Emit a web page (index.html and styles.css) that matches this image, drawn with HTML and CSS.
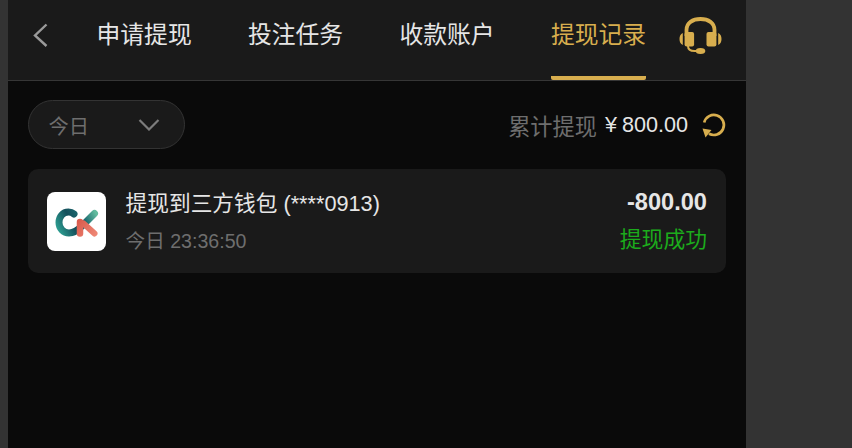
FILE: index.html
```html
<!DOCTYPE html>
<html lang="zh-CN">
<head>
  <meta charset="UTF-8" />
  <title>提现记录</title>
  <link rel="stylesheet" href="styles.css">
</head>
<body>
  <div class="app">
    <header class="topbar">
      <svg class="back" width="16" height="24" viewBox="0 0 16 24"><path d="M14.5 1.5 3 12.5 14.5 23" fill="none" stroke="#9a9a9a" stroke-width="2.4"/></svg>
      <nav class="tabs">
        <div class="tab">申请提现</div>
        <div class="tab">投注任务</div>
        <div class="tab">收款账户</div>
        <div class="tab active">提现记录</div>
      </nav>
      <svg class="support" width="44" height="40" viewBox="0 0 44 40">
        <path d="M7.500 20V14C7.500 7 13.500 3 21.500 3s14 4 14 11v6" fill="none" stroke="#d8ae4e" stroke-width="3.800"/>
        <rect x="5.600" y="16" width="9.500" height="14.500" rx="2" fill="#d8ae4e"/>
        <rect x="27.500" y="16" width="9.900" height="14.500" rx="2" fill="#d8ae4e"/>
        <path d="M3.800 17v12C1.500 28 .5 26 .5 23s1-5 3.300-6zM39.200 17v12c2.300-1 3.300-3 3.300-6s-1-5-3.300-6z" fill="#d8ae4e"/>
        <path d="M9 30c0 3.500 3 5 6.500 5H20" fill="none" stroke="#d8ae4e" stroke-width="2"/>
        <ellipse cx="21.500" cy="35" rx="4.800" ry="3" fill="#d8ae4e"/>
      </svg>
    </header>

    <main class="content">
      <div class="toolbar">
        <div class="filter">
          <span>今日</span>
          <svg width="22" height="12" viewBox="0 0 22 12"><path d="M1.500 1 11 10.500 20.500 1" fill="none" stroke="#7c7c7c" stroke-width="2.200"/></svg>
        </div>
        <div class="total">
          <span class="total-label">累计提现</span>
          <span class="total-value"><span class="yen">¥</span>800.00</span>
          <svg class="refresh" width="26" height="26" viewBox="0 0 26 26">
            <path d="M3.200 10.500A10 10 0 1 1 8 21.700" fill="none" stroke="#d8ae4e" stroke-width="2.700"/>
            <path d="M1.500 16.500 10.500 18 4.500 25.500z" fill="#d8ae4e"/>
          </svg>
        </div>
      </div>

      <div class="record">
        <svg class="logo" width="59" height="59" viewBox="0 0 59 59">
          <defs>
            <linearGradient id="ck" gradientUnits="userSpaceOnUse" x1="10" y1="40" x2="48" y2="20">
              <stop offset="0" stop-color="#2fa596"/>
              <stop offset="0.4" stop-color="#14505c"/>
              <stop offset="0.7" stop-color="#1c6a70"/>
              <stop offset="1" stop-color="#62bb9e"/>
            </linearGradient>
            <linearGradient id="ck-red" gradientUnits="userSpaceOnUse" x1="30" y1="28" x2="50" y2="44">
              <stop offset="0" stop-color="#d9584a"/>
              <stop offset="1" stop-color="#f08a78"/>
            </linearGradient>
          </defs>
          <rect width="59" height="59" rx="8" fill="#fff"/>
          <path d="M27 22C25.500 20.700 23.500 20 21.500 20 15.500 20 12 25 12 30.500 12 36.500 16.500 41 22 41 27.500 41 31 38 35 34L47.500 21.500" fill="none" stroke="url(#ck)" stroke-width="7" stroke-linecap="round"/>
          <path d="M36.500 31.500 47.500 41.500" fill="none" stroke="url(#ck-red)" stroke-width="6" stroke-linecap="round"/>
          <path d="M33 30V41.500" fill="none" stroke="url(#ck-red)" stroke-width="6.500" stroke-linecap="round"/>
        </svg>
        <div class="record-info">
          <div class="record-title">提现到三方钱包 (****0913)</div>
          <div class="record-time">今日 23:36:50</div>
        </div>
        <div class="record-side">
          <div class="record-amount">-800.00</div>
          <div class="record-status">提现成功</div>
        </div>
      </div>
    </main>
  </div>
</body>
</html>
```

FILE: styles.css
```css
* {
  box-sizing: border-box;
}

html,
body {
  height: 100%;
}

body {
  margin: 0;
  padding-left: 8px;
  overflow: hidden;
  background-color: #333333;
  font-family: "Liberation Sans", "Noto Sans CJK SC", sans-serif;
}

.app {
  width: 738px;
  height: 100%;
  background-color: #0a0a0a;
}

.topbar {
  display: flex;
  align-items: center;
  height: 81px;
  padding: 0 23px 0 24px;
  background-color: #1a1a1a;
  border-bottom: 1px solid #363636;
}

.back {
  flex: none;
  margin-bottom: 11px;
}

.tabs {
  display: flex;
  gap: 56.300px;
  height: 100%;
  margin-left: 48.500px;
  flex: 1;
}

.tab {
  height: 100%;
  padding-top: 19px;
  font-size: 23.800px;
  line-height: 32px;
  color: #e6e6e6;
}

.tab.active {
  color: #d8ae4e;
  border-bottom: 4px solid #d8ae4e;
  border-radius: 0 0 2px 2px;
}

.support {
  flex: none;
  margin-bottom: 8px;
}

.content {
  padding: 19px 20px 0;
}

.toolbar {
  display: flex;
  align-items: center;
  justify-content: space-between;
}

.filter {
  display: flex;
  align-items: center;
  justify-content: space-between;
  width: 157px;
  height: 49px;
  padding: 0 24px 0 19.500px;
  background-color: #1a1a1a;
  border: 1px solid #333333;
  border-radius: 25px;
  font-size: 20.300px;
  color: #6e6e6e;
}

.total {
  display: flex;
  align-items: center;
  gap: 8px;
  font-size: 22.200px;
  margin-right: -1px;
}

.total-label {
  color: #6e6e6e;
}

.total-value {
  margin-right: 5px;
  font-size: 21.600px;
  color: #e6e6e6;
}

.yen {
  margin-right: 5px;
}

.record {
  display: flex;
  align-items: center;
  height: 104px;
  margin-top: 20px;
  padding: 0 19px;
  background-color: #1a1a1a;
  border-radius: 10px;
}

.logo {
  flex: none;
  margin-top: 1px;
}

.record-info {
  flex: 1;
  margin-left: 19.600px;
}

.record-title {
  font-size: 21.700px;
  line-height: 30px;
  color: #e6e6e6;
}

.record-time {
  margin-top: 9px;
  font-size: 19.600px;
  line-height: 26px;
  color: #6e6e6e;
}

.record-side {
  text-align: right;
}

.record-amount {
  margin-top: -2px;
  font-size: 23.600px;
  line-height: 30px;
  font-weight: 700;
  color: #e6e6e6;
}

.record-status {
  margin-top: 10px;
  font-size: 21.800px;
  line-height: 26px;
  color: #1cab1c;
}
```
